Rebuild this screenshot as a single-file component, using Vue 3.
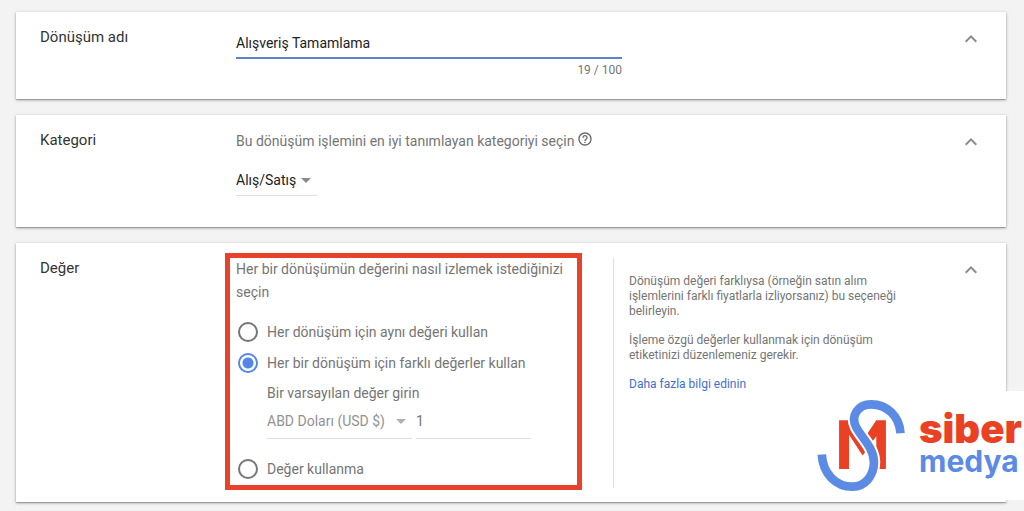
<script setup>
import { ref } from 'vue'

const name = ref('Alışveriş Tamamlama')
const category = ref('sale')
const mode = ref('different')
const currency = ref('usd')
const amount = ref('1')
</script>

<template>
  <main class="page">
    <section class="card card-name">
      <h2 class="title"><label for="conversion-name">Dönüşüm adı</label></h2>
      <div class="content">
        <input id="conversion-name" v-model="name" class="name-input" type="text" maxlength="100" />
        <span class="counter">{{ name.length }} / 100</span>
      </div>
      <button class="toggle" type="button" aria-label="Dönüşüm adı bölümünü daralt">
        <svg viewBox="0 0 24 24"><path d="M12 8l-6 6 1.4 1.4 4.6-4.6 4.6 4.6L18 14z" /></svg>
      </button>
    </section>

    <section class="card card-category">
      <h2 class="title">Kategori</h2>
      <div class="content">
        <div class="prompt">
          <label for="category">Bu dönüşüm işlemini en iyi tanımlayan kategoriyi seçin</label>
          <button class="help" type="button" aria-label="Yardım">
            <svg viewBox="0 0 24 24">
              <path d="M11 18h2v-2h-2v2zm1-16C6.48 2 2 6.48 2 12s4.48 10 10 10 10-4.48 10-10S17.52 2 12 2zm0 18c-4.41 0-8-3.59-8-8s3.59-8 8-8 8 3.59 8 8-3.59 8-8 8zm0-14c-2.21 0-4 1.79-4 4h2c0-1.1.9-2 2-2s2 .9 2 2c0 2-3 1.75-3 5h2c0-2.25 3-2.5 3-5 0-2.21-1.79-4-4-4z" />
            </svg>
          </button>
        </div>
        <div class="select category-select">
          <select id="category" v-model="category">
            <option value="sale">Alış/Satış</option>
          </select>
          <svg class="caret" viewBox="0 0 10 5"><path d="M0 0h10L5 5z" /></svg>
        </div>
      </div>
      <button class="toggle" type="button" aria-label="Kategori bölümünü daralt">
        <svg viewBox="0 0 24 24"><path d="M12 8l-6 6 1.4 1.4 4.6-4.6 4.6 4.6L18 14z" /></svg>
      </button>
    </section>

    <section class="card card-value">
      <h2 class="title">Değer</h2>
      <div class="highlight" role="radiogroup" aria-labelledby="value-question">
        <p id="value-question" class="question">Her bir dönüşümün değerini nasıl izlemek istediğinizi seçin</p>
        <label class="option">
          <input v-model="mode" type="radio" name="mode" value="same" />
          <span>Her dönüşüm için aynı değeri kullan</span>
        </label>
        <label class="option">
          <input v-model="mode" type="radio" name="mode" value="different" />
          <span>Her bir dönüşüm için farklı değerler kullan</span>
        </label>
        <div class="default-value">
          <label for="amount">Bir varsayılan değer girin</label>
          <div class="fields">
            <div class="select currency-select">
              <select v-model="currency" aria-label="Para birimi">
                <option value="usd">ABD Doları (USD $)</option>
              </select>
              <svg class="caret" viewBox="0 0 10 5"><path d="M0 0h10L5 5z" /></svg>
            </div>
            <input id="amount" v-model="amount" class="amount" type="text" inputmode="decimal" />
          </div>
        </div>
        <label class="option">
          <input v-model="mode" type="radio" name="mode" value="none" />
          <span>Değer kullanma</span>
        </label>
      </div>
      <aside class="info">
        <p>Dönüşüm değeri farklıysa (örneğin satın alım işlemlerini farklı fiyatlarla izliyorsanız) bu seçeneği belirleyin.</p>
        <p>İşleme özgü değerler kullanmak için dönüşüm etiketinizi düzenlemeniz gerekir.</p>
        <a href="#">Daha fazla bilgi edinin</a>
      </aside>
      <button class="toggle" type="button" aria-label="Değer bölümünü daralt">
        <svg viewBox="0 0 24 24"><path d="M12 8l-6 6 1.4 1.4 4.6-4.6 4.6 4.6L18 14z" /></svg>
      </button>
      <div class="brand">
        <svg class="mark" viewBox="0 0 270 280" aria-hidden="true">
          <path class="red" d="M69 64h30l41 62 41-62h29v147h-29V112l-41 58-41-62v103H69z" />
          <path class="gap" d="M252 103C250 50 212 16 166 16C124 16 104 52 120 84C136 116 173 145 174 190C174 232 146 264 110 264C58 264 20 224 17 167" />
          <path class="red-line" d="M97 94l44 70" />
          <path class="blue" d="M254 103C250 50 212 16 166 16C124 16 104 52 120 84C136 116 173 145 174 190C174 232 146 264 110 264C58 264 20 224 17 167" />
        </svg>
        <div class="wordmark">
          <span class="siber">siber</span>
          <span class="medya">medya</span>
        </div>
      </div>
    </section>
  </main>
</template>

<style>
body {
  background: #f3f3f3;
}
</style>

<style scoped>
.page {
  display: flex;
  flex-direction: column;
  gap: 16px;
  padding: 12px 18px 8px 16px;
  font-family: Roboto, "Noto Sans", sans-serif;
  font-size: 14px;
  line-height: 20px;
  color: #757575;
}

.page * {
  box-sizing: border-box;
}

.card {
  position: relative;
  display: grid;
  grid-template-columns: 196px minmax(0, 386px) 1fr;
  align-items: start;
  padding: 0 23px 0 24px;
  background: #fff;
  box-shadow: 0 1px 3px rgba(0, 0, 0, 0.3), 0 1px 1px rgba(0, 0, 0, 0.2);
}

.card-name {
  padding-bottom: 19px;
}

.card-category {
  padding-bottom: 31px;
}

.card-value {
  grid-template-columns: 185px 357px minmax(0, 1fr) 24px;
  padding-bottom: 12px;
}

.title {
  margin: 15px 0 0;
  font-size: 15px;
  font-weight: 400;
  color: #333;
}

input,
select,
button {
  margin: 0;
  padding: 0;
  border: 0;
  border-radius: 0;
  background: none;
  font: inherit;
  color: inherit;
  outline: 0;
}

.toggle {
  justify-self: end;
  width: 24px;
  height: 24px;
  margin-top: 15px;
}

.toggle svg,
.help svg {
  display: block;
  fill: #8a8a8a;
}

.card-name .content {
  display: flex;
  flex-direction: column;
  padding-top: 16px;
}

.name-input {
  width: 100%;
  height: 31px;
  border-bottom: 2px solid #5b84cc;
  color: #212121;
}

.counter {
  margin-top: 1px;
  align-self: flex-end;
  font-size: 12px;
}

.prompt {
  display: flex;
  gap: 3px;
  margin-top: 16px;
}

.help {
  width: 16px;
  height: 16px;
}

.help svg {
  fill: #666;
}

.select {
  position: relative;
  border-bottom: 1px solid #dedede;
}

.select select {
  display: block;
  width: 100%;
  height: 100%;
  appearance: none;
}

.caret {
  position: absolute;
  right: 6px;
  top: 50%;
  width: 10px;
  height: 5px;
  margin-top: -2px;
  fill: #8a8a8a;
  pointer-events: none;
}

.category-select {
  width: 81px;
  height: 32px;
  margin-top: 13px;
  color: #212121;
}

.highlight {
  margin-top: 10px;
  padding: 0 0 1px 6px;
  border: 5px solid #e8412c;
}

.question {
  margin: 0 0 12px;
  line-height: 23px;
}

.option {
  display: flex;
  align-items: center;
  gap: 9px;
  height: 31px;
  padding-left: 2px;
}

.option input {
  flex: none;
  width: 20px;
  height: 20px;
  border: 2px solid #757575;
  border-radius: 50%;
  appearance: none;
}

.option input:checked {
  border-color: #5586e6;
  background: radial-gradient(circle, #5586e6 5px, transparent 6px);
}

.default-value {
  margin: 5px 0 14px 31px;
}

.fields {
  display: flex;
  gap: 4px;
  height: 36px;
}

.currency-select {
  width: 145px;
  color: #929292;
}

.currency-select .caret {
  fill: #b0b0b0;
}

.amount {
  width: 115px;
  border-bottom: 1px solid #dedede;
}

.info {
  align-self: start;
  max-width: 304px;
  min-height: 230px;
  margin: 15px 0 0 31px;
  padding: 16px 0 0 15px;
  border-left: 1px solid #dedede;
  font-size: 12px;
  line-height: 15px;
}

.info p {
  margin: 0 0 14px;
}

.info a {
  color: #3f6fc9;
  text-decoration: none;
}

.brand {
  position: absolute;
  right: -18px;
  bottom: 2px;
  display: flex;
  width: 210px;
  height: 109px;
  background: #fff;
}

.mark {
  flex: none;
  width: 90px;
  height: 93px;
  margin: 8px 0 0 2px;
}

.mark path {
  fill: none;
}

.mark .red {
  fill: #ea4024;
}

.mark .gap {
  stroke: #fff;
  stroke-width: 38;
}

.mark .red-line {
  stroke: #ea4024;
  stroke-width: 7;
}

.mark .blue {
  stroke: #5b8be5;
  stroke-width: 26;
}

.wordmark {
  display: flex;
  flex-direction: column;
  margin: 19px 0 0 13px;
  font-family: Inter, sans-serif;
}

.siber {
  font-size: 40px;
  font-weight: 900;
  line-height: 38px;
  color: #ea4024;
}

.medya {
  font-size: 30px;
  font-weight: 700;
  line-height: 26px;
  color: #5b8be5;
}
</style>
